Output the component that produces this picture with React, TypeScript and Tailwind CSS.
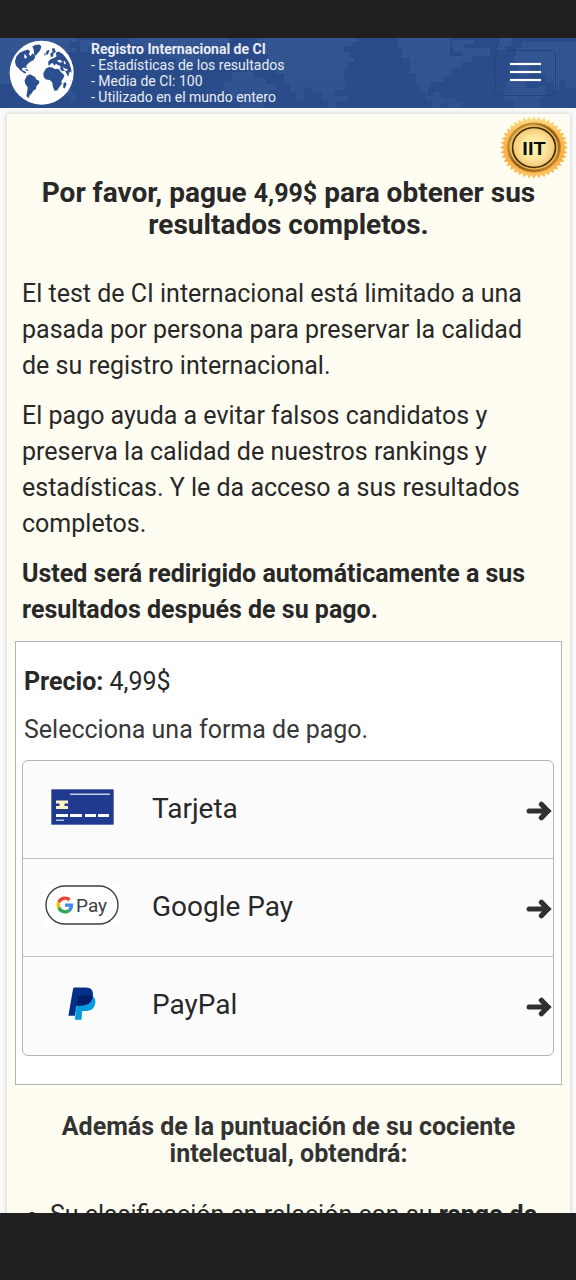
import type { ReactNode } from "react";

function GlobeLogo() {
  return (
    <svg viewBox="27 11 198 200" className="h-[66px] w-[66px] shrink-0" aria-hidden="true">
      <circle cx="125" cy="110" r="97" fill="#fff" />
      <g fill="#2b4f90">
        <path d="M48 62 58 50 70 44 84 40 90 46 86 54 92 60 96 52 104 56 105 64 100 72 92 76 84 82 78 90 80 97 74 94 66 96 65 102 72 105 78 108 76 113 68 109 60 103 54 96 47 88 44 76Z" />
        <path d="M97 30 106 26 118 25 124 30 122 38 118 46 112 52 107 59 102 54 101 42Z" />
        <path d="M80 119 90 115 98 119 106 124 108 130 118 135 117 143 110 150 107 160 100 164 95 172 88 179 86 188 79 181 81 168 83 155 76 145 73 134Z" />
        <path d="M138 97 148 93 158 94 164 99 176 98 184 109 194 118 191 126 185 135 186 144 178 154 172 164 164 165 159 153 157 140 150 132 138 131 131 123 130 112Z" />
        <path d="M191 142 198 138 200 146 195 158 190 155Z" />
        <path d="M137 48 144 41 149 43 145 52 141 57Z" />
        <path d="M151 53 158 47 156 37 164 36 168 47 161 51 160 60 153 63Z" />
        <path d="M145 76 152 69 160 66 170 61 168 50 176 46 188 53 198 64 208 79 214 97 216 110 211 106 208 112 205 122 199 110 195 104 187 106 179 96 182 90 174 87 168 83 164 89 157 80 150 86 145 88Z" />
      </g>
      <g fill="#fff">
        <path d="M73 53 80 61 78 68 72 65Z" />
        <path d="M171 73 181 71 188 78 179 80Z" />
        <path d="M188 92 196 98 204 99 201 105 193 103Z" />
        <path d="M151 91 163 89 174 93 184 92 180 97 165 97Z" />
        <path d="M191 76 196 75 198 85 193 83Z" />
      </g>
      <path d="m77 99 9 3-3 3-8-3Zm57-47 4 1-2 5-4-1Z" fill="#2b4f90" />
    </svg>
  );
}

function WorldBackdrop() {
  return (
    <svg
      className="absolute inset-0 h-full w-full"
      viewBox="0 0 576 70"
      preserveAspectRatio="xMaxYMid slice"
      aria-hidden="true"
    >
      <defs>
        <pattern id="dots" width="2" height="2" patternUnits="userSpaceOnUse">
          <rect width="2" height="2" fill="#30528f" />
          <rect width="1" height="1" fill="#3c5f9a" />
        </pattern>
        <linearGradient id="shade" x1="0" y1="0" x2="0" y2="1">
          <stop offset="0" stopColor="#2b4d8c" stopOpacity="0" />
          <stop offset="1" stopColor="#2b4d8c" stopOpacity="0.35" />
        </linearGradient>
      </defs>
      <g fill="url(#dots)">
        <path d="M0 0H78V4H70V10H76V14H66V24H54V32H44V40H32V44H24V52H12V46H0Z" />
        <path d="M66 50h6v6h4v8h-6v-6h-4ZM80 2h14v6h-6v6h-8Z" />
        <path d="M130 0H230V6H222V12H210V20H196V26H190V34H184V28H176V20H160V12H142V6H130Z" />
        <path d="M232 34H248V30H254V40H266V46H276V52H270V62H264V70H240V60H230V54H224V44H232Z" />
        <path d="M258 0H358V4H352V8H344V14H350V20H354V24H348V32H344V44H346V52H334V58H348V64H336V70H328V62H322V54H312V50H304V62H296V54H290V46H284V36H276V26H268V16H262V8H258Z" />
        <path d="M398 0H450V18H462V10H490V18H472V24H462V30H452V38H444V44H430V50H428V58H434V54H440V60H446V66H440V70H432V62H426V54H420V46H416V36H410V20H402V10H398Z" />
        <path d="M452 2H474V6H464V14H454ZM500 0H512V8H506V14H498V6H500Z" />
        <path d="M516 10H522V4H576V50H566V42H560V52H554V44H546V36H540V26H530V38H518V24H514V18H516Z" />
        <path d="M506 44H526V50H538V48H546V60H540V70H514V62H504V52H506Z" />
        <path d="M446 60h10v4h6v6h-14Z" />
      </g>
      <g stroke="#456497" strokeWidth=".5" opacity=".3" fill="none">
        <path d="m462 70 14-54M472 70l4-54M482 70l-4-54M492 70l-12-54M452 56l24-40M370 2l3 68M400 6l14 50M125 70l-5-52M80 50l54 20M180 35l75 35" />
      </g>
      <rect width="576" height="70" fill="url(#shade)" />
    </svg>
  );
}

const sealTeeth = Array.from({ length: 80 }, (_, i) => {
  const radius = i % 2 === 0 ? 34 : 30;
  const angle = (i * Math.PI) / 40;
  return `${34 + radius * Math.cos(angle)},${34 + radius * Math.sin(angle)}`;
}).join(" ");

function Seal() {
  return (
    <svg
      viewBox="0 0 68 68"
      preserveAspectRatio="none"
      className="absolute right-[2px] top-[2px] h-[63px] w-[68px]"
      role="img"
      aria-label="IIT"
    >
      <defs>
        <linearGradient id="rim" x1="0" y1="0" x2="0" y2="1">
          <stop offset="0" stopColor="#fce08a" />
          <stop offset=".3" stopColor="#fdbc50" />
          <stop offset=".7" stopColor="#fbac42" />
          <stop offset="1" stopColor="#fdc867" />
        </linearGradient>
        <linearGradient id="ring" x1="0" y1="0" x2="1" y2="1">
          <stop offset="0" stopColor="#b98230" />
          <stop offset=".25" stopColor="#dba544" />
          <stop offset=".5" stopColor="#8a5a18" />
          <stop offset=".75" stopColor="#b97724" />
          <stop offset="1" stopColor="#e9b24b" />
        </linearGradient>
        <radialGradient id="face">
          <stop offset="0" stopColor="#fff5b8" />
          <stop offset=".6" stopColor="#fde59a" />
          <stop offset="1" stopColor="#f5c777" />
        </radialGradient>
      </defs>
      <polygon points={sealTeeth} fill="url(#rim)" />
      <circle cx="34" cy="34" r="26.5" fill="url(#ring)" stroke="#c08a32" strokeWidth="1" />
      <circle cx="34" cy="34" r="25.5" fill="none" stroke="#6f4a16" strokeWidth="1" strokeDasharray="1 1" opacity=".7" />
      <circle cx="34" cy="34" r="23.2" fill="none" stroke="#edc35e" strokeWidth="1.3" />
      <circle cx="34" cy="34" r="21.3" fill="url(#face)" stroke="#3b280b" strokeWidth="1.6" />
      <circle cx="34" cy="34" r="20" fill="none" stroke="#f0c468" strokeWidth=".8" />
      <text
        x="34"
        y="42"
        textAnchor="middle"
        fontFamily="Liberation Sans, sans-serif"
        fontWeight="700"
        fontSize="20"
        fill="#0b0b0b"
      >
        IIT
      </text>
    </svg>
  );
}

function CardIcon() {
  return (
    <svg viewBox="0 0 63 36" className="h-9 w-[63px]" aria-hidden="true">
      <rect x=".5" y=".5" width="62" height="35" rx=".5" fill="#203a8f" stroke="#4a60a6" strokeWidth=".6" />
      <path d="M19 5.200H59" stroke="#c9cfe3" strokeWidth="1.400" />
      <path d="M5 11.500h12v3h-3.500v2.500h3.500v3H5v-3h3.500v-2.500H5Z" fill="#fdf3c0" />
      <path d="M5 26.500h12M19 26.500h12M34 26.500h11M47 26.500h11" stroke="#fff" strokeWidth="3" />
      <path d="M5 31.200h8" stroke="#dfe4f2" strokeWidth="1.200" />
    </svg>
  );
}

function GooglePayIcon() {
  return (
    <svg viewBox="0 0 74 40" className="h-10 w-[74px]" aria-hidden="true">
      <rect width="74" height="40" fill="#fff" />
      <rect x="1" y="1" width="72" height="38" rx="19" fill="#fff" stroke="#3c4043" strokeWidth="1.400" />
      <g transform="translate(11.500 11.500) scale(.354)">
        <path fill="#EA4335" d="M24 9.500c3.540 0 6.710 1.220 9.210 3.600l6.850-6.850C35.900 2.380 30.470 0 24 0 14.620 0 6.510 5.380 2.560 13.220l7.980 6.190C12.430 13.720 17.740 9.500 24 9.500z" />
        <path fill="#4285F4" d="M46.980 24.550c0-1.570-.15-3.090-.38-4.550H24v9.020h12.940c-.58 2.960-2.260 5.480-4.780 7.180l7.730 6c4.510-4.180 7.090-10.360 7.090-17.650z" />
        <path fill="#FBBC05" d="M10.530 28.590c-.48-1.450-.76-2.990-.76-4.590s.27-3.140.76-4.590l-7.980-6.190C.92 16.460 0 20.120 0 24c0 3.880.92 7.540 2.560 10.780l7.970-6.190z" />
        <path fill="#34A853" d="M24 48c6.480 0 11.930-2.130 15.890-5.810l-7.730-6c-2.150 1.450-4.920 2.300-8.160 2.300-6.260 0-11.570-4.220-13.470-9.910l-7.980 6.190C6.510 42.620 14.620 48 24 48z" />
      </g>
      <text x="31" y="27" fontFamily="Roboto, sans-serif" fontSize="19" fill="#3c4043">
        Pay
      </text>
    </svg>
  );
}

function PayPalIcon() {
  return (
    <svg viewBox="0 0 28 33" className="h-[33px] w-7" aria-hidden="true">
      <path fill="#009cde" d="M24.800 9.500c2.300 1.600 3 4.400 2.300 7.500-1.100 5-4.500 7-9.600 7h-2.200c-.8 0-1.100.4-1.300 1.100l-.4 7.600H6.800L10 9.500Z" />
      <path fill="#003087" d="M7.200.5h10.600c5.300 0 8 3.200 7 8.700-1.100 6.500-5.200 9.200-11.300 9.200H10c-1 0-1.400.5-1.600 1.400l-1.500 9H.4L4.900 2.500C5.200 1 5.700.5 7.200.5Z" />
      <path fill="#001f6b" d="M11.400 8.800h12c.6 0 1 .2 1.500.5-1.100 6.300-5.200 9.100-11.400 9.100H10c-.4 0-.8.2-1.100.4l1.400-8.800c.1-.7.500-1.200 1.100-1.200Z" />
    </svg>
  );
}

function Arrow() {
  return (
    <svg viewBox="0 0 26 20" className="h-5 w-[26px] shrink-0" aria-hidden="true">
      <path d="M3.200 10h14M15.400 3.300 21.800 10l-6.400 6.700" fill="none" stroke="#303030" strokeWidth="5.200" strokeLinecap="round" />
      <path d="m18 3.500 7.600 6.500-7.600 6.500Z" fill="#303030" />
    </svg>
  );
}

function PaymentOption({ icon, label }: { icon: ReactNode; label: string }) {
  return (
    <button type="button" className="flex h-[98px] w-full items-center pb-[2px] pr-[1px] text-left">
      <span className="flex w-[118px] shrink-0 justify-center pb-[3px]">{icon}</span>
      <span className="ml-[11px] flex-1 text-[28px] leading-9 text-[#282828]">{label}</span>
      <span className="pt-1">
        <Arrow />
      </span>
    </button>
  );
}

export default function App() {
  return (
    <div className="flex h-screen flex-col overflow-hidden bg-[#202020] font-['Roboto',sans-serif] text-[#282828]">
      <div className="h-[38px] shrink-0" />
      <div className="min-h-0 flex-1 overflow-hidden bg-[#fafafa]">
        <header className="relative flex h-[70px] items-center justify-between overflow-hidden bg-[#2a4b89]">
          <WorldBackdrop />
          <a href="#inicio" className="relative flex items-center gap-4 pl-[9px] text-[#e9ecf3]">
            <GlobeLogo />
            <span className="text-sm leading-4">
              <strong className="block font-bold">Registro Internacional de CI</strong>
              <span className="block">- Estadísticas de los resultados</span>
              <span className="block">- Media de CI: 100</span>
              <span className="block">- Utilizado en el mundo entero</span>
            </span>
          </a>
          <button
            type="button"
            aria-label="Menú"
            className="relative mr-5 flex h-[46px] w-[61px] flex-col items-center justify-center gap-[6px] rounded-md border border-[#244480] pb-[2px]"
          >
            <span className="h-[2px] w-[31px] bg-white shadow-[0_0_1px_#fff]" />
            <span className="h-[2px] w-[31px] bg-white shadow-[0_0_1px_#fff]" />
            <span className="h-[2px] w-[31px] bg-white shadow-[0_0_1px_#fff]" />
          </button>
        </header>

        <main className="relative ml-[7px] mr-[6px] mt-[6px] bg-[#fffdf1] px-2 pt-[63px] shadow-[0_0_5px_rgba(0,0,0,0.2)]">
          <Seal />
          <h1 className="text-center text-[28px] font-bold leading-[31px]">
            Por favor, pague <span className="text-[25px]">4,99$</span> para obtener sus resultados completos.
          </h1>

          <div className="mt-9 flex flex-col gap-[14px] px-[7px] text-[25px] leading-9">
            <p>El test de CI internacional está limitado a una pasada por persona para preservar la calidad de su registro internacional.</p>
            <p>El pago ayuda a evitar falsos candidatos y preserva la calidad de nuestros rankings y estadísticas. Y le da acceso a sus resultados completos.</p>
            <p className="font-bold">Usted será redirigido automáticamente a sus resultados después de su pago.</p>
          </div>

          <section className="mt-[13px] border border-[#b3b3b3] bg-white px-[6px] pb-7 pt-[22px]">
            <p className="px-[2px] text-[25px] leading-9">
              <strong className="font-bold">Precio:</strong> 4,99$
            </p>
            <p className="mt-3 px-[2px] text-[25px] leading-9 text-[#383838]">Selecciona una forma de pago.</p>
            <div className="mr-[1px] mt-3 divide-y divide-[#c0c0c0] rounded-md border border-[#b5b5b5] bg-[#fcfcfc]">
              <PaymentOption icon={<CardIcon />} label="Tarjeta" />
              <PaymentOption icon={<GooglePayIcon />} label="Google Pay" />
              <PaymentOption icon={<PayPalIcon />} label="PayPal" />
            </div>
          </section>

          <h2 className="mt-7 px-7 text-center text-[25px] font-bold leading-[27px] text-[#333]">
            Además de la puntuación de su cociente intelectual, obtendrá:
          </h2>
          <ul className="mt-[30px] list-disc pl-[35px] text-[25px] leading-9">
            <li>
              Su clasificación en relación con su <strong className="font-bold">rango de edad</strong>
            </li>
          </ul>
        </main>
      </div>
      <div className="h-[67px] shrink-0" />
    </div>
  );
}
